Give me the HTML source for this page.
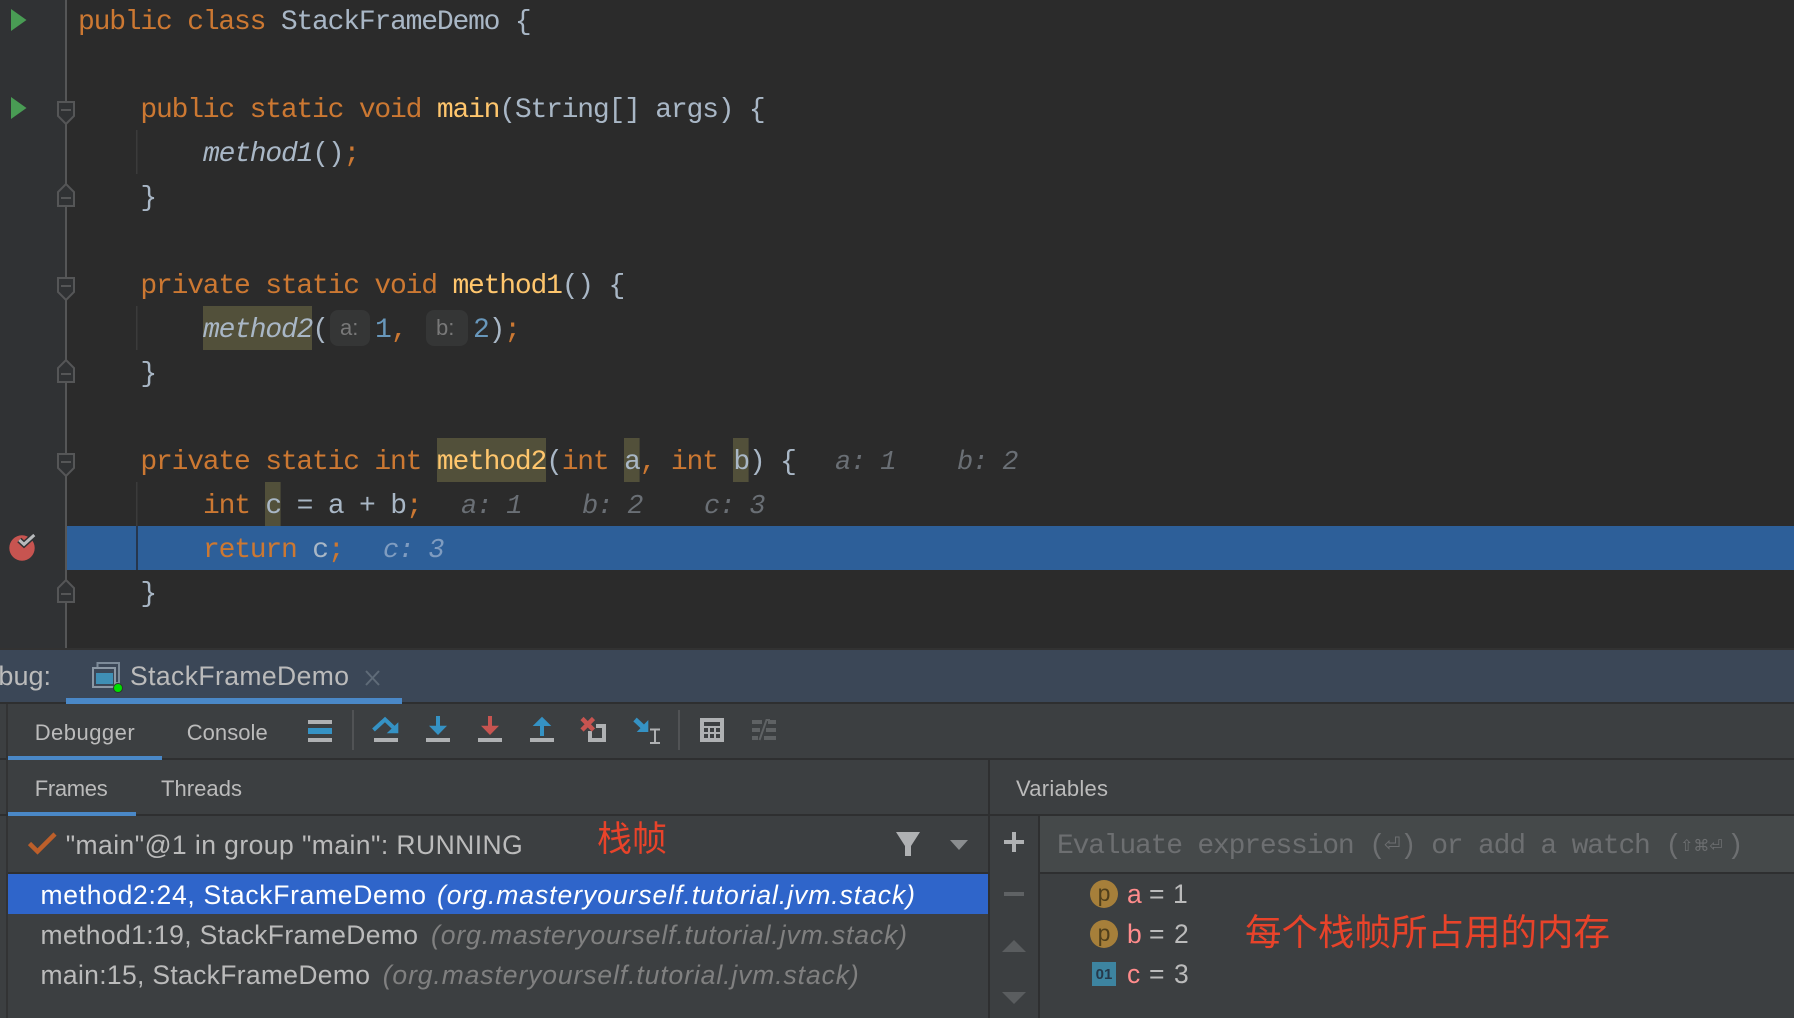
<!DOCTYPE html>
<html><head><meta charset="utf-8"><title>StackFrameDemo</title>
<style>
html,body{margin:0;padding:0;background:#2b2b2b;width:1794px;height:1018px;overflow:hidden}
svg{display:block}
.c{font-family:"Liberation Mono","DejaVu Sans Mono",monospace;font-size:28px;letter-spacing:-1.2px;fill:#a9b7c6;white-space:pre}
.k{fill:#cc7832}.f{fill:#ffc66d}.n{fill:#6897bb}.i{font-style:italic}
.h{font-family:"Liberation Mono",monospace;font-style:italic;font-size:27px;letter-spacing:-1.1px;fill:#6a6f75}
.s{font-family:"Liberation Sans",Arial,sans-serif;font-size:22px;fill:#bbbbbb}
.r{font-family:"Liberation Sans",Arial,sans-serif;font-size:26.5px;fill:#bbbbbb}
.g{fill:#808080;font-style:italic}
.z{font-family:"Liberation Sans","Noto Sans CJK SC",sans-serif;fill:#e8432a}
</style></head><body>
<svg xmlns="http://www.w3.org/2000/svg" width="1794" height="1018" viewBox="0 0 1794 1018">
<!-- backgrounds -->
<rect width="1794" height="1018" fill="#2b2b2b"/>
<rect width="65" height="648" fill="#303234"/>
<rect y="648" width="1794" height="2" fill="#323232"/>
<rect y="650" width="1794" height="52" fill="#3b4757"/>
<rect y="702" width="1794" height="316" fill="#3c3f41"/>
<rect y="702" width="1794" height="2" fill="#2e2f30"/>
<rect x="66" y="698" width="336" height="6" fill="#4a88c7"/>

<!-- highlights -->
<rect x="203" y="306" width="109" height="44" fill="#52503a"/>
<rect x="437" y="438" width="109" height="44" fill="#52503a"/>
<rect x="624" y="438" width="15.6" height="44" fill="#52503a"/>
<rect x="733" y="438" width="15.6" height="44" fill="#52503a"/>
<rect x="265" y="482" width="15.6" height="44" fill="#52503a"/>
<rect x="67" y="526" width="1727" height="44" fill="#2d5f99"/>
<rect x="330" y="310" width="40" height="36" rx="8" fill="#353636"/>
<rect x="426" y="310" width="42" height="36" rx="8" fill="#353636"/>

<!-- guides -->
<rect x="136" y="130" width="1.5" height="44" fill="#3b3b3b"/>
<rect x="136" y="306" width="1.5" height="44" fill="#3b3b3b"/>
<rect x="136" y="482" width="1.5" height="44" fill="#3b3b3b"/>
<rect x="136" y="526" width="2" height="44" fill="#26364d"/>

<!-- gutter -->
<rect x="65" y="0" width="2" height="648" fill="#555657"/>
<g fill="#303234" stroke="#555657" stroke-width="2">
<path d="M58 102H74V116L66 124L58 116Z"/><path d="M58 278H74V292L66 300L58 292Z"/><path d="M58 454H74V468L66 476L58 468Z"/>
<path d="M58 206H74V192L66 184L58 192Z"/><path d="M58 382H74V368L66 360L58 368Z"/><path d="M58 602H74V588L66 580L58 588Z"/>
</g>
<g fill="#555657">
<rect x="61" y="109" width="10" height="2"/><rect x="61" y="285" width="10" height="2"/><rect x="61" y="461" width="10" height="2"/>
<rect x="61" y="197" width="10" height="2"/><rect x="61" y="373" width="10" height="2"/><rect x="61" y="593" width="10" height="2"/>
</g>
<path d="M11 9L26.5 20L11 31Z" fill="#499c54"/>
<path d="M11 97L26.5 108L11 119Z" fill="#499c54"/>
<circle cx="22" cy="548" r="12.7" fill="#c75450"/>
<path d="M19.3 540L24 544.3L34.3 535" fill="none" stroke="#303234" stroke-width="6"/>
<path d="M19.3 540L24 544.3L34.3 535" fill="none" stroke="#b8babc" stroke-width="3"/>

<!-- code -->
<text class="c" xml:space="preserve" x="78" y="29"><tspan class="k">public class </tspan>StackFrameDemo {</text>
<text class="c" xml:space="preserve" x="140.4" y="117"><tspan class="k">public static void </tspan><tspan class="f">main</tspan>(String[] args) {</text>
<text class="c" xml:space="preserve" x="203" y="161"><tspan class="i">method1</tspan>()<tspan class="k">;</tspan></text>
<text class="c" x="140.4" y="205">}</text>
<text class="c" xml:space="preserve" x="140.4" y="293"><tspan class="k">private static void </tspan><tspan class="f">method1</tspan>() {</text>
<text class="c" xml:space="preserve" x="203" y="337"><tspan class="i">method2</tspan>(</text>
<text class="s" x="340" y="335" style="fill:#787878;font-size:22px">a:</text>
<text class="c" x="375" y="337" style="fill:#6897bb">1</text><text class="c" x="391" y="337" style="fill:#cc7832">,</text>
<text class="s" x="436" y="335" style="fill:#787878;font-size:22px">b:</text>
<text class="c" xml:space="preserve" x="473" y="337"><tspan class="n">2</tspan>)<tspan class="k">;</tspan></text>
<text class="c" x="140.4" y="381">}</text>
<text class="c" xml:space="preserve" x="140.4" y="469"><tspan class="k">private static int </tspan><tspan class="f">method2</tspan>(<tspan class="k">int </tspan>a<tspan class="k">, int </tspan>b) {</text>
<text class="h" x="835" y="469">a: 1</text><text class="h" x="957" y="469">b: 2</text>
<text class="c" xml:space="preserve" x="203" y="513"><tspan class="k">int </tspan>c = a + b<tspan class="k">;</tspan></text>
<text class="h" x="461" y="513">a: 1</text><text class="h" x="582" y="513">b: 2</text><text class="h" x="704" y="513">c: 3</text>
<text class="c" xml:space="preserve" x="203" y="557"><tspan class="k">return </tspan>c<tspan class="k">;</tspan></text>
<text class="h" x="383" y="557" style="fill:#7f9cc0">c: 3</text>
<text class="c" x="140.4" y="601">}</text>

<!-- debug tab bar -->
<text class="r" x="51" y="685" text-anchor="end" style="font-size:27px">Debug:</text>
<rect x="97.5" y="663" width="21.5" height="20" fill="none" stroke="#7d8b99" stroke-width="2"/>
<rect x="93" y="668" width="22" height="19" fill="#3b4757" stroke="#8b98a5" stroke-width="2"/>
<rect x="96" y="673" width="17" height="11" fill="#3f8fb5"/>
<circle cx="118" cy="688" r="4.5" fill="#00e000" stroke="#2a3a2a" stroke-width="1"/>
<text class="r" x="130" y="685" textLength="219" lengthAdjust="spacing" style="font-size:26.5px">StackFrameDemo</text>
<path d="M366 671L379 685M379 671L366 685" stroke="#5f6b78" stroke-width="2"/>

<!-- toolbar -->
<text class="s" x="34.7" y="740" textLength="100">Debugger</text>
<text class="s" x="186.7" y="740" textLength="81">Console</text>
<rect x="0" y="758" width="1794" height="2" fill="#2e2f30"/>
<rect x="8" y="756" width="154" height="4" fill="#4a88c7"/>
<rect x="6" y="704" width="2" height="314" fill="#323334"/>

<rect x="308" y="720" width="24" height="4" fill="#afb1b3"/><rect x="308" y="728" width="24" height="6" fill="#3592c4"/><rect x="308" y="738" width="24" height="4" fill="#afb1b3"/>
<rect x="352" y="710" width="2" height="40" fill="#515355"/>
<!-- step over -->
<path d="M373.5 730L385 719.5L395 729" fill="none" stroke="#3592c4" stroke-width="4"/>
<path d="M398.3 722.3V733.3H386.7Z" fill="#3592c4"/>
<rect x="374" y="738" width="24" height="4" fill="#afb1b3"/>
<!-- step into -->
<rect x="436" y="716" width="4" height="12" fill="#3592c4"/><path d="M429 725.7H447L438 735Z" fill="#3592c4"/>
<rect x="426" y="738" width="24" height="4" fill="#afb1b3"/>
<!-- force step into -->
<rect x="488" y="716" width="4" height="12" fill="#c75450"/><path d="M481 725.7H499L490 735Z" fill="#c75450"/>
<rect x="478" y="738" width="24" height="4" fill="#afb1b3"/>
<!-- step out -->
<rect x="540" y="724" width="4" height="12" fill="#3592c4"/><path d="M532.7 726H551.3L542 716.7Z" fill="#3592c4"/>
<rect x="530" y="738" width="24" height="4" fill="#afb1b3"/>
<!-- drop frame -->
<path d="M596 726H604V740H590V731" fill="none" stroke="#afb1b3" stroke-width="4"/>
<path d="M582 718.5L593.5 730M593.5 718.5L582 730" stroke="#c75450" stroke-width="4.5"/>
<!-- run to cursor -->
<path d="M635 719.5L643.5 727.5" stroke="#3592c4" stroke-width="5"/>
<path d="M648.3 720V732H636.7Z" fill="#3592c4"/>
<path d="M650 729.5H660M655 729.5V743M650 743H660" fill="none" stroke="#afb1b3" stroke-width="2"/>
<rect x="678" y="710" width="2" height="40" fill="#515355"/>
<!-- calc -->
<path fill-rule="evenodd" fill="#afb1b3" d="M700 718H724V742H700ZM704 722V726H720V722ZM704 728V732H708V728ZM710 728V732H714V728ZM716 728V732H720V728ZM704 734V738H708V734ZM710 734V738H714V734ZM716 734V738H720V734Z"/>
<!-- trace -->
<g fill="#5f6264"><rect x="752" y="720" width="10" height="4"/><rect x="768" y="720" width="8" height="4"/><rect x="752" y="728" width="8" height="4"/><rect x="766" y="728" width="10" height="4"/><rect x="752" y="736" width="6" height="4"/><rect x="764" y="736" width="12" height="4"/></g>
<path d="M759.5 740L766.5 720H770" fill="none" stroke="#5f6264" stroke-width="2"/>

<!-- frames -->
<text class="s" x="34.7" y="796" textLength="73">Frames</text>
<text class="s" x="161" y="796" textLength="81">Threads</text>
<rect x="0" y="814" width="1794" height="2" fill="#2e2f30"/>
<rect x="8" y="812" width="128" height="4" fill="#4a88c7"/>
<rect x="988" y="760" width="2" height="258" fill="#2e2f30"/>
<text class="s" x="1016" y="796" textLength="92">Variables</text>

<path d="M29.5 843.5L37.5 851.5L55 834" fill="none" stroke="#bd5f2a" stroke-width="4.5"/>
<text class="r" x="65.7" y="854" textLength="457">"main"@1 in group "main": RUNNING</text>
<text class="z" x="597" y="851" font-size="35">栈帧</text>
<path d="M896 832H920L911 846V856H905V846Z" fill="#afb1b3"/>
<path d="M950 840H968L959 850Z" fill="#8a8d8f"/>
<rect x="8" y="872" width="980" height="2" fill="#2e2f30"/>
<rect x="8" y="874" width="980" height="40" fill="#2f65ca"/>
<text class="r" x="40.5" y="904" textLength="385.5" style="fill:#fff">method2:24, StackFrameDemo</text>
<text class="r" x="437" y="904" textLength="478" style="fill:#fff;font-style:italic">(org.masteryourself.tutorial.jvm.stack)</text>
<text class="r" x="40.5" y="944" textLength="377.5">method1:19, StackFrameDemo</text>
<text class="r g" x="431" y="944" textLength="476" style="fill:#808080">(org.masteryourself.tutorial.jvm.stack)</text>
<text class="r" x="40.5" y="984" textLength="329.5">main:15, StackFrameDemo</text>
<text class="r g" x="382.7" y="984" textLength="476" style="fill:#808080">(org.masteryourself.tutorial.jvm.stack)</text>

<!-- variables -->
<rect x="1038" y="816" width="2" height="202" fill="#2e2f30"/>
<rect x="1040" y="816" width="754" height="56" fill="#45494a"/>
<rect x="1040" y="872" width="754" height="2" fill="#2e2f30"/>
<path d="M1004 842H1024M1014 832V852" stroke="#afb1b3" stroke-width="4"/>
<rect x="1004" y="892" width="20" height="4" fill="#5f6264"/>
<path d="M1014 940L1026 952H1002Z" fill="#5a5d5f"/>
<path d="M1002 992H1026L1014 1004Z" fill="#5a5d5f"/>
<text xml:space="preserve" class="c" x="1057" y="853" style="fill:#6d6f71">Evaluate expression (</text>
<text x="1384" y="851" style="fill:#6d6f71;font-size:20px;font-family:'DejaVu Sans',sans-serif">⏎</text>
<text xml:space="preserve" class="c" x="1400" y="853" style="fill:#6d6f71">) or add a watch (</text>
<text x="1680" y="851" style="fill:#6d6f71;font-size:16px;font-family:'DejaVu Sans',sans-serif">⇧⌘⏎</text>
<text class="c" x="1727" y="853" style="fill:#6d6f71">)</text>
<circle cx="1104" cy="894" r="14" fill="#a67f3a"/>
<text x="1104" y="901" text-anchor="middle" style="font-family:'Liberation Sans',sans-serif;font-size:23px;fill:#4f3f1c">p</text>
<circle cx="1104" cy="934" r="14" fill="#a67f3a"/>
<text x="1104" y="941" text-anchor="middle" style="font-family:'Liberation Sans',sans-serif;font-size:23px;fill:#4f3f1c">p</text>
<rect x="1092" y="962" width="24" height="24" fill="#3d84a0"/>
<text x="1104" y="979" text-anchor="middle" style="font-family:'Liberation Sans',sans-serif;font-size:15px;font-weight:bold;fill:#26394a">01</text>
<text class="r" x="1127" y="903"><tspan style="fill:#ff8c8c">a</tspan><tspan x="1149">=</tspan><tspan x="1173">1</tspan></text>
<text class="r" x="1127" y="943"><tspan style="fill:#ff8c8c">b</tspan><tspan x="1149">=</tspan><tspan x="1174">2</tspan></text>
<text class="r" x="1127" y="983"><tspan style="fill:#ff8c8c">c</tspan><tspan x="1149">=</tspan><tspan x="1174">3</tspan></text>
<text class="z" x="1245" y="945" font-size="36.5">每个栈帧所占用的内存</text>
</svg>
</body></html>
